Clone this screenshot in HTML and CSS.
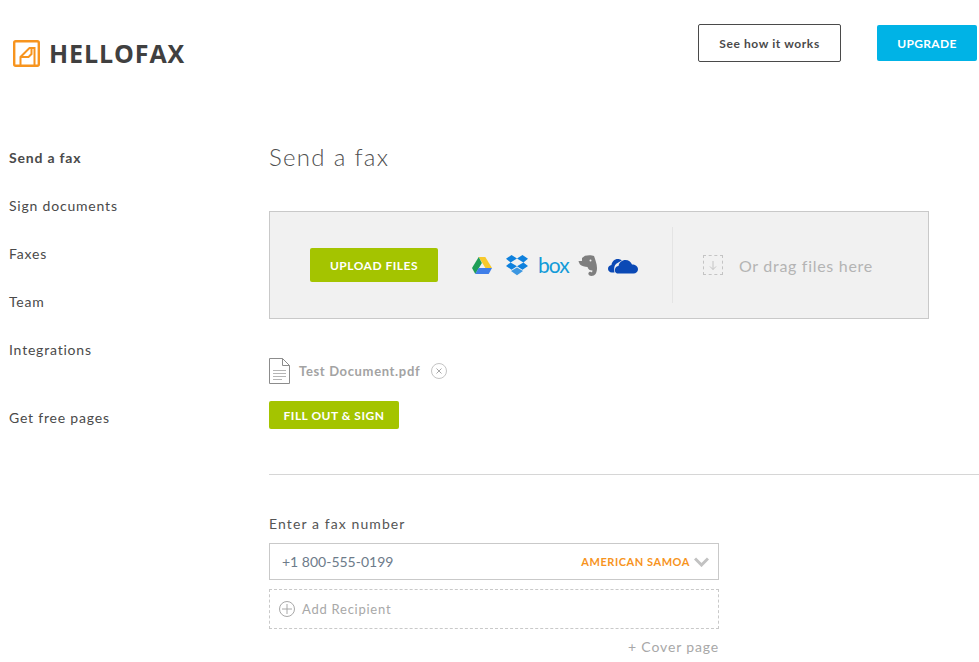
FILE: index.html
```html
<!DOCTYPE html>
<html lang="en">
<head>
  <meta charset="UTF-8">
  <title>HelloFax - Send a fax</title>
  <link rel="stylesheet" href="styles.css">
</head>
<body>
  <header class="topbar">
    <a class="logo" href="#">
      <svg class="logo_mark" width="27" height="27" viewBox="0 0 27 27" fill="none" stroke="#f7941e" stroke-width="2.4">
        <rect x="1.2" y="1.2" width="24.600" height="24.600" rx="1.500"/>
        <path d="M7.500 25v-8l9-9h5v17M7.500 17h8l3-3v-6" stroke-width="2"/>
      </svg>
      <span class="logo_text">HELLOFAX</span>
    </a>
    <div class="top_actions">
      <a class="btn_how" href="#">See how it works</a>
      <a class="btn_upgrade" href="#">UPGRADE</a>
    </div>
  </header>

  <div class="layout">
    <nav class="sidebar">
      <a class="active" href="#">Send a fax</a>
      <a href="#">Sign documents</a>
      <a href="#">Faxes</a>
      <a href="#">Team</a>
      <a href="#">Integrations</a>
      <a class="free" href="#">Get free pages</a>
    </nav>

    <main class="content">
      <h1>Send a fax</h1>

      <section class="upload">
        <div class="upload_left">
          <button class="btn_green btn_upload">UPLOAD FILES</button>
          <div class="sources">
            <svg class="drive" width="20" height="17" viewBox="0 0 20 17">
              <path d="M6.700 0h6.600l6.700 11h-6.600z" fill="#f7c92c"/>
              <path d="M6.700 0L0 11l3.300 6 6.600-11z" fill="#1e9e57"/>
              <path d="M6.600 11H20l-3.300 6H3.300z" fill="#3f7ee8"/>
            </svg>
            <svg width="22" height="21" viewBox="0 0 22 21" fill="#0f81dd">
              <path d="M5.500 0L0 3.800l4.600 3.600L11 3.600zM16.500 0L11 3.600l6.400 3.800L22 3.800zM0 11l5.500 3.700L11 11.200 4.600 7.400zM17.400 7.400L11 11.200l5.500 3.500L22 11z"/>
              <path d="M5 16l6-3.600 6 3.600-6 4.300z" opacity=".8"/>
            </svg>
            <span class="box_logo">box</span>
            <svg width="19" height="21" viewBox="0 0 19 21" fill="#7f7f7f">
              <path d="M4 3L7 .8C10-.2 14 0 16 1c1 3 3 8 3 12 0 5-2 8-5.500 8-2.500 0-3.500-1.500-3-3 .5-1.500 2.500-1.500 3.500-.5l.5-2c-2.500 0-4.500-1-5-3.500-2.500 0-6-1-7.500-2.500C1 8 .5 6 .5 6H4z"/>
              <circle cx="12.500" cy="5.500" r="1" fill="#f1f1f1"/>
            </svg>
            <svg width="30" height="18" viewBox="0 0 30 18" fill="#0b49b5">
              <path d="M4 16.500c-2.500 0-4-1.700-4-3.700s1.500-3.500 3.500-3.700c.2-3.500 3-6.100 6.300-6.100 1.500 0 3 .5 4 1.500L9.500 7c-2.500 1-4 4-3 9.500z"/>
              <path d="M9 17.500c-1.800-1-2.500-2.500-2-4.500.5-2 2-3 3.500-3 .5-3.500 3.500-6 7-6 3 0 5.500 1.800 6.500 4.500 3.200 0 6 2 6 4.700 0 2.600-2 4.300-4.500 4.300z"/>
            </svg>
          </div>
        </div>
        <div class="upload_drag">
          <span class="drag_icon">
            <svg width="10" height="11" viewBox="0 0 10 11" fill="none" stroke="#c4c4c4" stroke-width="1"><path d="M5 1v8.500M2 6.500l3 3 3-3"/></svg>
          </span>
          <span class="drag_text">Or drag files here</span>
        </div>
      </section>

      <div class="file_row">
        <svg width="21" height="26" viewBox="0 0 21 26" fill="none" stroke="#8c8c8c" stroke-width="1">
          <path d="M.5.500h13l7 7v18H.500zM13.500.500v7h7"/>
          <path d="M4 12.500h13M4 15.500h13M4 18.500h13M4 21.500h9" stroke="#b5b5b5"/>
        </svg>
        <span class="file_name">Test Document.pdf</span>
        <span class="file_remove">
          <svg width="8" height="8" viewBox="0 0 8 8" stroke="#a8a8a8" stroke-width="1"><path d="M1.500 1.500l5 5M6.500 1.500l-5 5"/></svg>
        </span>
      </div>

      <button class="btn_green btn_sign">FILL OUT &amp; SIGN</button>

      <hr class="divider">

      <section class="recipient">
        <label class="fax_label" for="fax">Enter a fax number</label>
        <div class="fax_input">
          <input id="fax" type="text" value="+1 800-555-0199">
          <span class="country">AMERICAN SAMOA</span>
          <svg width="15" height="10" viewBox="0 0 15 10" fill="none" stroke="#c2c2c2" stroke-width="3"><path d="M1 1.500l6.500 6.500 6.500-6.500"/></svg>
        </div>
        <div class="add_recipient">
          <span class="plus_icon">
            <svg width="10" height="10" viewBox="0 0 10 10" stroke="#a8a8a8" stroke-width="1"><path d="M5 0v10M0 5h10"/></svg>
          </span>
          Add Recipient
        </div>
        <div class="cover_page">+ Cover page</div>
      </section>
    </main>
  </div>
</body>
</html>
```

FILE: styles.css
```css
html, body {
  margin: 0;
  height: 662px;
  overflow: hidden;
  background: #fff;
}
body {
  font-family: "Lato", "Liberation Sans", sans-serif;
  color: #4a4a4a;
}
a {
  text-decoration: none;
  color: inherit;
}

.topbar {
  display: flex;
  justify-content: space-between;
  padding: 24px 2px 0 13px;
  height: 110px;
  box-sizing: border-box;
}
.logo {
  display: flex;
  align-items: center;
  gap: 9px;
  height: 58px;
}
.logo_text {
  font-family: "Open Sans", sans-serif;
  font-weight: 700;
  font-size: 25px;
  letter-spacing: .9px;
  color: #404040;
}
.top_actions {
  display: flex;
  gap: 36px;
  align-items: flex-start;
}
.btn_how {
  box-sizing: border-box;
  width: 143px;
  height: 38px;
  border: 1px solid #4a4a4a;
  border-radius: 2px;
  display: flex;
  align-items: center;
  justify-content: center;
  font-size: 12px;
  font-weight: 700;
  letter-spacing: .6px;
}
.btn_upgrade {
  width: 100px;
  height: 36px;
  margin-top: 1px;
  background: #00b3e6;
  border-radius: 2px;
  color: #fff;
  display: flex;
  align-items: center;
  justify-content: center;
  font-size: 12px;
  font-weight: 700;
  letter-spacing: .35px;
}

.layout {
  display: flex;
}
.sidebar {
  width: 269px;
  flex: none;
  padding: 36px 0 0 9px;
  box-sizing: border-box;
  display: flex;
  flex-direction: column;
}
.sidebar a {
  height: 48px;
  font-size: 14px;
  line-height: 24px;
  letter-spacing: .8px;
}
.sidebar a.active {
  font-weight: 700;
}
.sidebar a.free {
  margin-top: 20px;
}

.content {
  flex: 1;
}
h1 {
  margin: 32px 0 39px;
  font-size: 24px;
  line-height: 30px;
  font-weight: 300;
  letter-spacing: 1.3px;
  color: #4f4f4f;
}

.upload {
  width: 660px;
  height: 108px;
  box-sizing: border-box;
  background: #f1f1f1;
  border: 1px solid #c9c9c9;
  display: flex;
  align-items: center;
  padding-left: 40px;
}
.upload_left {
  display: flex;
  align-items: center;
  width: 362px;
  height: 76px;
  border-right: 1px solid #e4e4e4;
  flex: none;
}
.btn_green {
  border: 0;
  background: #a4c400;
  color: #fff;
  font-family: inherit;
  font-weight: 700;
  font-size: 12px;
  letter-spacing: .5px;
  border-radius: 2px;
  padding: 0;
}
.btn_upload {
  width: 128px;
  height: 34px;
}
.sources {
  display: flex;
  align-items: center;
  gap: 11px;
  margin-left: 34px;
}
.drive {
  margin-right: 3px;
}
.box_logo {
  width: 29px;
  margin-left: -1px;
  font-size: 21px;
  line-height: 22px;
  letter-spacing: -1px;
  color: #139bd8;
}
.upload_drag {
  display: flex;
  align-items: center;
  gap: 16px;
  padding-left: 30px;
}
.drag_icon {
  box-sizing: border-box;
  width: 20px;
  height: 20px;
  border: 1px dashed #c4c4c4;
  display: flex;
  align-items: center;
  justify-content: center;
}
.drag_text {
  font-size: 16px;
  letter-spacing: .7px;
  color: #b4b4b4;
}

.file_row {
  display: flex;
  align-items: center;
  margin-top: 39px;
  height: 26px;
}
.file_name {
  margin-left: 9px;
  font-size: 13px;
  font-weight: 700;
  letter-spacing: .65px;
  color: #a3a3a3;
}
.file_remove {
  box-sizing: border-box;
  width: 16px;
  height: 16px;
  border: 1px solid #c4c4c4;
  border-radius: 50%;
  margin-left: 11px;
  display: flex;
  align-items: center;
  justify-content: center;
}
.btn_sign {
  display: block;
  width: 130px;
  height: 28px;
  margin-top: 17px;
}
.divider {
  margin: 45px 0 0;
  border: 0;
  border-top: 1px solid #d6d6d6;
}

.recipient {
  width: 450px;
  padding-top: 40px;
}
.fax_label {
  display: block;
  font-size: 14px;
  line-height: 18px;
  letter-spacing: 1.1px;
  color: #555;
}
.fax_input {
  box-sizing: border-box;
  height: 37px;
  margin-top: 10px;
  border: 1px solid #c9c9c9;
  display: flex;
  align-items: center;
  padding: 0 9px 0 12px;
}
.fax_input input {
  flex: 1;
  min-width: 0;
  border: 0;
  outline: 0;
  padding: 0;
  font-family: inherit;
  font-size: 14px;
  letter-spacing: 0;
  color: #6d7b8a;
}
.country {
  font-size: 11px;
  font-weight: 700;
  letter-spacing: .55px;
  color: #f7941e;
  margin-right: 4px;
}
.add_recipient {
  box-sizing: border-box;
  height: 40px;
  margin-top: 9px;
  border: 1px dashed #c9c9c9;
  display: flex;
  align-items: center;
  gap: 7px;
  padding-left: 9px;
  font-size: 13px;
  letter-spacing: .75px;
  color: #a8a8a8;
}
.plus_icon {
  box-sizing: border-box;
  width: 16px;
  height: 16px;
  border: 1px solid #a8a8a8;
  border-radius: 50%;
  display: flex;
  align-items: center;
  justify-content: center;
}
.cover_page {
  margin-top: 9px;
  text-align: right;
  font-size: 14px;
  letter-spacing: .85px;
  color: #a8a8a8;
}
```
